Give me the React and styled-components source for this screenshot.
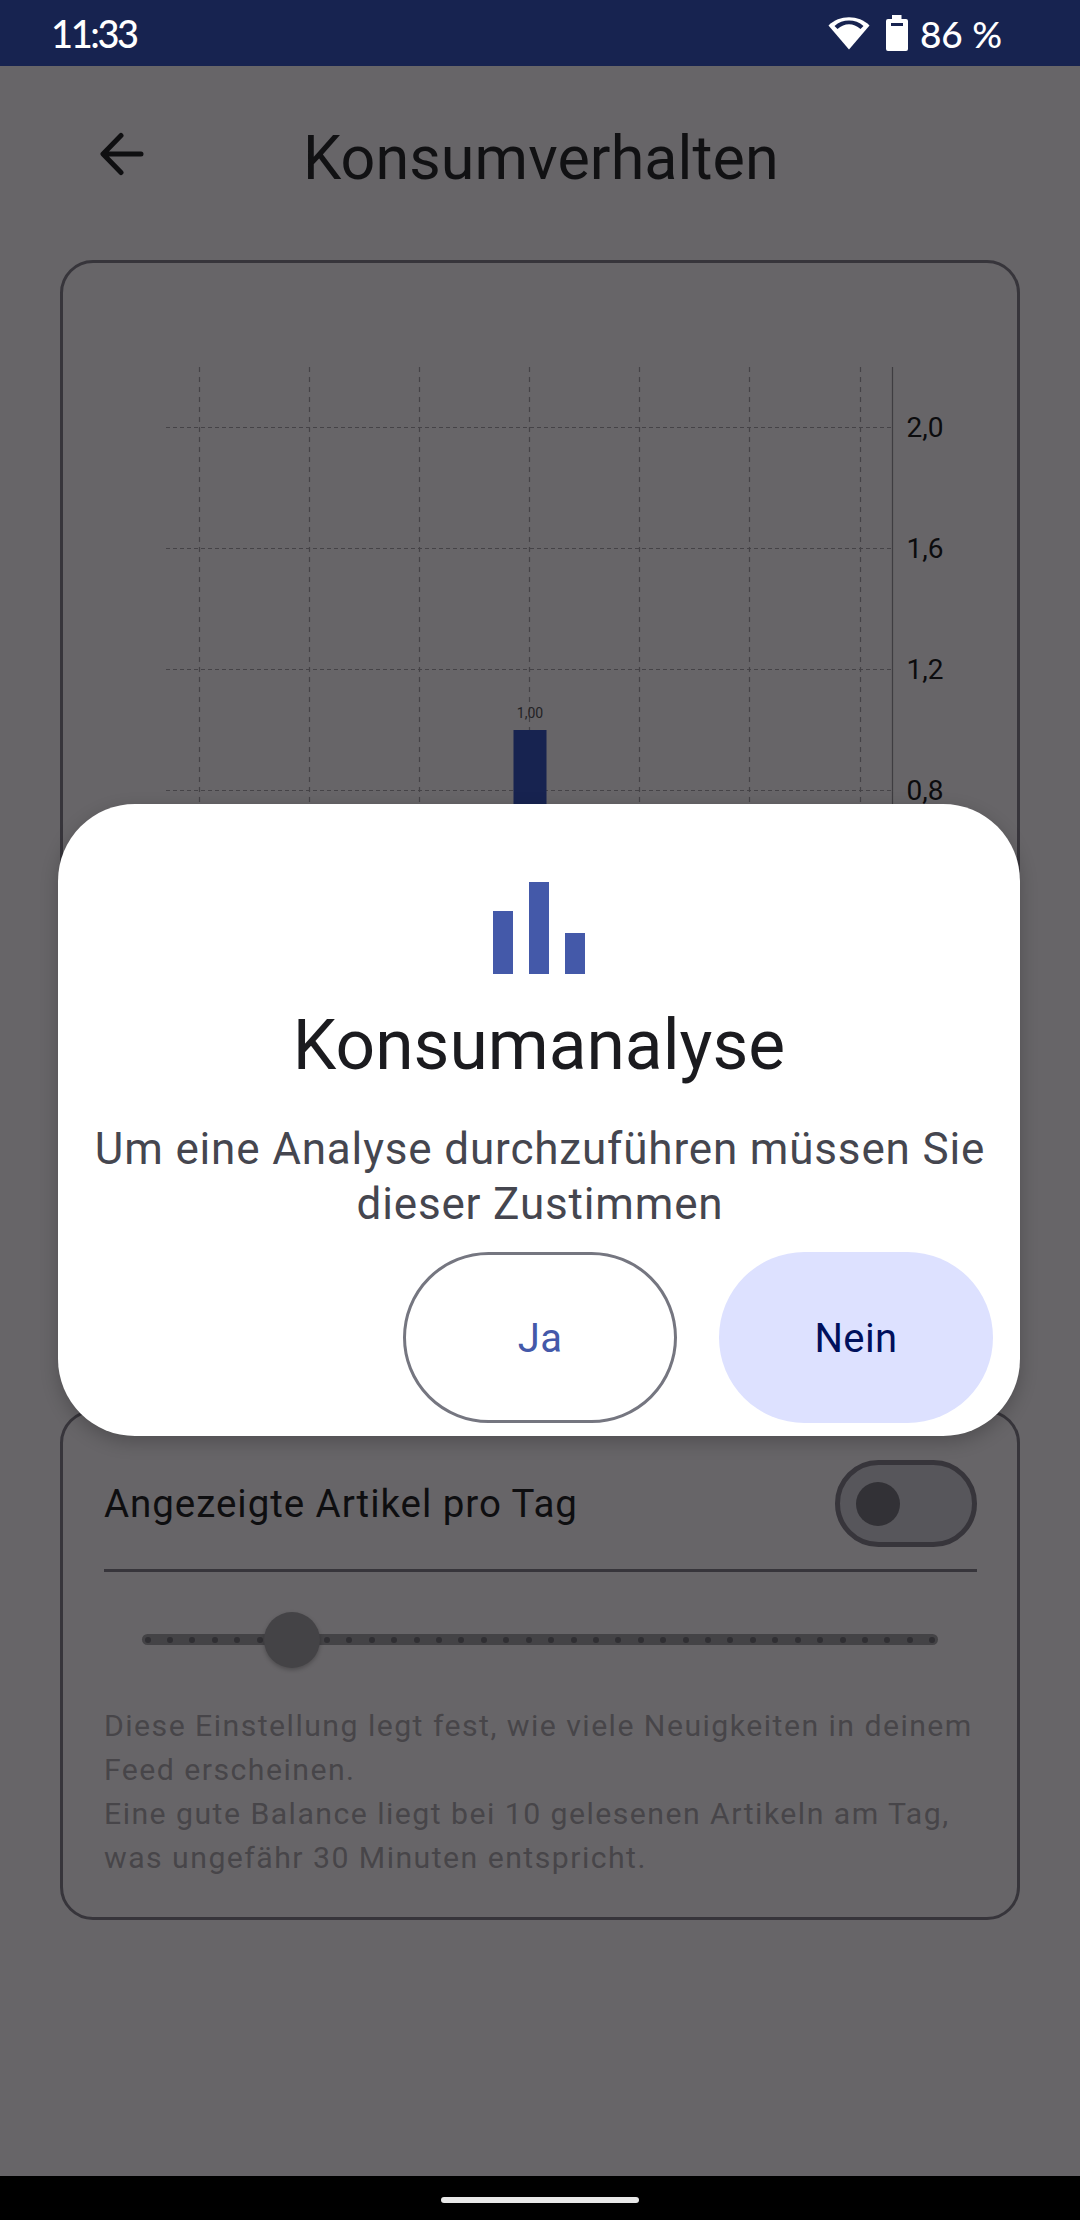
import React from "react";
import styled, { createGlobalStyle } from "styled-components";

const GlobalStyle = createGlobalStyle`
  html, body {
    margin: 0;
    padding: 0;
    background: #676568;
    font-family: Roboto, "Liberation Sans", sans-serif;
  }
`;

const GRID_X = [199, 309, 419, 529, 639, 749, 860];
const GRID_Y = [
  { y: 427.5, label: "2,0" },
  { y: 548.5, label: "1,6" },
  { y: 669.5, label: "1,2" },
  { y: 790.5, label: "0,8" },
  { y: 911.5, label: "0,4" },
  { y: 1032.5, label: "0,0" },
];
const TICKS = Array.from({ length: 36 }, (_, i) => i);

const Chart = () => (
  <ChartSvg viewBox="0 0 960 800" width="960" height="800">
    {GRID_X.map((x) => (
      <line key={x} x1={x - 59.5} x2={x - 59.5} y1="107" y2="772" stroke="#454347" strokeWidth="1.2" strokeDasharray="5 5" />
    ))}
    {GRID_Y.map(({ y, label }) => (
      <g key={label}>
        <line x1="106" x2="832" y1={y - 260} y2={y - 260} stroke="#454347" strokeWidth="1.2" strokeDasharray="4 3" />
        <text x="846.5" y={y - 260 + 9} fontSize="28" fill="#0c0c0e" fontFamily="Roboto">{label}</text>
      </g>
    ))}
    <line x1="832.5" x2="832.5" y1="107" y2="772" stroke="#3f3d41" strokeWidth="1.2" />
    <rect x="453.5" y="470" width="33" height="304" fill="#172350" />
    <text x="470" y="458" fontSize="14" textAnchor="middle" fill="#232225" fontFamily="Roboto">1,00</text>
  </ChartSvg>
);

const WifiIcon = () => (
  <svg width="42" height="34" viewBox="0 0 42 34">
    <path d="M0.5 9.5 C11 -1.5 31 -1.5 41.5 9.5 L21 33.5 Z" fill="#fff" />
    <path d="M6.5 10 C14.5 2.7 27.5 2.7 35.5 10 L32.5 13 C25.5 6.6 16.5 6.6 9.5 13 Z" fill="#172350" />
  </svg>
);

const BatteryIcon = () => (
  <svg width="22" height="36" viewBox="0 0 22 36">
    <path d="M6 0 H15.5 V4 H20 Q22 4 22 6 V34 Q22 36 20 36 H2 Q0 36 0 34 V6 Q0 4 2 4 H6 Z" fill="#fff" />
    <rect x="5" y="8" width="12" height="3" fill="#172350" />
  </svg>
);

const BackIcon = () => (
  <svg width="44" height="44" viewBox="0 0 44 44" fill="none" stroke="#0f0f11" strokeWidth="5" strokeLinecap="round" strokeLinejoin="round">
    <path d="M41 22 H4 M21 3.5 L3 22 L21 40.5" />
  </svg>
);

const AnalysisIcon = () => (
  <svg width="92" height="92" viewBox="0 0 92 92" fill="#4459a9">
    <rect x="0" y="29" width="20" height="63" />
    <rect x="36" y="0" width="20" height="92" />
    <rect x="72" y="51" width="20" height="41" />
  </svg>
);

export default function App() {
  return (
    <>
      <GlobalStyle />
      <Page>
        <StatusBar>
          <Clock>11:33</Clock>
          <StatusIcons>
            <WifiIcon />
            <BatteryIcon />
            <BatteryText>86 %</BatteryText>
          </StatusIcons>
        </StatusBar>

        <Header>
          <BackButton><BackIcon /></BackButton>
          <Title>Konsumverhalten</Title>
        </Header>

        <Content>
          <ChartCard>
            <Chart />
          </ChartCard>

          <SettingsCard>
            <SettingRow>
              <SettingLabel>Angezeigte Artikel pro Tag</SettingLabel>
              <Switch><SwitchThumb /></Switch>
            </SettingRow>
            <Divider />
            <Slider>
              <Track>
                {TICKS.map((i) => <Tick key={i} />)}
              </Track>
              <SliderThumb />
            </Slider>
            <HelpText>
              Diese Einstellung legt fest, wie viele Neuigkeiten in deinem Feed erscheinen.
              <br />
              Eine gute Balance liegt bei 10 gelesenen Artikeln am Tag, was ungefähr 30 Minuten entspricht.
            </HelpText>
          </SettingsCard>
        </Content>

        <NavBar><HomePill /></NavBar>

        <Dialog>
          <AnalysisIcon />
          <DialogTitle>Konsumanalyse</DialogTitle>
          <DialogText>Um eine Analyse durchzuführen müssen Sie dieser Zustimmen</DialogText>
          <DialogActions>
            <OutlineButton>Ja</OutlineButton>
            <FilledButton>Nein</FilledButton>
          </DialogActions>
        </Dialog>
      </Page>
    </>
  );
}

const Page = styled.div`
  position: relative;
  width: 1080px;
  height: 2220px;
  display: flex;
  flex-direction: column;
  overflow: hidden;
  background: #676568;
`;

const StatusBar = styled.div`
  height: 66px;
  flex: none;
  display: flex;
  align-items: center;
  justify-content: space-between;
  padding: 0 78px 0 51px;
  background: #172350;
  color: #fff;
  font-family: Lato, Roboto, sans-serif;
`;

const Clock = styled.span`
  font-size: 38px;
  font-weight: 500;
  letter-spacing: -2.4px;
`;

const StatusIcons = styled.div`
  display: flex;
  align-items: center;
  gap: 16px;
`;

const BatteryText = styled.span`
  font-size: 37px;
  font-weight: 500;
  margin-left: -4px;
`;

const Header = styled.div`
  height: 194px;
  flex: none;
  display: flex;
  align-items: flex-start;
  padding: 65px 0 0 100px;
  box-sizing: border-box;
`;

const BackButton = styled.div`
  width: 44px;
  height: 44px;
  margin-top: 1px;
`;

const Title = styled.h1`
  margin: -13px 0 0 159px;
  font-size: 61px;
  font-weight: 400;
  letter-spacing: 0.1px;
  line-height: 80px;
  color: #111113;
`;

const Content = styled.div`
  flex: 1;
  display: flex;
  flex-direction: column;
  gap: 18px;
  padding: 0 60px;
`;

const ChartCard = styled.section`
  height: 1132px;
  box-sizing: border-box;
  border: 3px solid #37353b;
  border-radius: 33px;
  overflow: hidden;
`;

const ChartSvg = styled.svg`
  display: block;
  margin: -3px;
`;

const SettingsCard = styled.section`
  height: 510px;
  box-sizing: border-box;
  border: 3px solid #37353b;
  border-radius: 33px;
  padding: 47px 40px 0 41px;
`;

const SettingRow = styled.div`
  display: flex;
  align-items: center;
  justify-content: space-between;
  height: 87px;
`;

const SettingLabel = styled.span`
  font-size: 38.5px;
  letter-spacing: 0.95px;
  color: #0e0e10;
`;

const Switch = styled.div`
  width: 142px;
  height: 87px;
  box-sizing: border-box;
  border: 5.5px solid #37353b;
  border-radius: 44px;
  background: #57565b;
  display: flex;
  align-items: center;
  padding-left: 16px;
`;

const SwitchThumb = styled.div`
  width: 44px;
  height: 44px;
  border-radius: 50%;
  background: #323136;
`;

const Divider = styled.div`
  height: 3px;
  margin-top: 22px;
  background: #37353b;
`;

const Slider = styled.div`
  position: relative;
  margin: 62px 0 0 38px;
  width: 796px;
  height: 11px;
`;

const Track = styled.div`
  height: 11px;
  box-sizing: border-box;
  border-radius: 6px;
  background: #444346;
  display: flex;
  align-items: center;
  justify-content: space-between;
  padding: 0 2.5px;
`;

const Tick = styled.div`
  width: 6px;
  height: 6px;
  border-radius: 50%;
  background: #302f33;
`;

const SliderThumb = styled.div`
  position: absolute;
  left: 122px;
  top: -22.5px;
  width: 56px;
  height: 56px;
  border-radius: 50%;
  background: #444346;
  box-shadow: 0 2px 4px rgba(0, 0, 0, 0.25);
`;

const HelpText = styled.p`
  margin: 59px 0 0;
  font-size: 30.25px;
  line-height: 44px;
  letter-spacing: 1.45px;
  color: #474549;
`;

const NavBar = styled.div`
  height: 44px;
  flex: none;
  background: #000;
  display: flex;
  justify-content: center;
  padding-top: 21px;
  box-sizing: border-box;
`;

const HomePill = styled.div`
  width: 198px;
  height: 6px;
  border-radius: 3px;
  background: #e8e8e8;
`;

const Dialog = styled.div`
  position: absolute;
  left: 58px;
  top: 804px;
  width: 962px;
  height: 632px;
  box-sizing: border-box;
  padding-top: 78px;
  border-radius: 77px;
  background: #fff;
  box-shadow: 0 6px 18px rgba(0, 0, 0, 0.22);
  display: flex;
  flex-direction: column;
  align-items: center;
`;

const DialogTitle = styled.h2`
  margin: 28px 0 0;
  font-size: 69.5px;
  font-weight: 400;
  line-height: 88px;
  color: #1b1b1f;
`;

const DialogText = styled.p`
  margin: 32px 0 0 2px;
  width: 920px;
  font-size: 44px;
  line-height: 55px;
  letter-spacing: 0.84px;
  text-align: center;
  color: #45464f;
`;

const DialogActions = styled.div`
  align-self: stretch;
  display: flex;
  justify-content: flex-end;
  gap: 42px;
  margin-top: 20px;
  padding-right: 27px;
`;

const ActionButton = styled.div`
  width: 274px;
  height: 171px;
  box-sizing: border-box;
  padding-top: 2px;
  border-radius: 86px;
  display: flex;
  align-items: center;
  justify-content: center;
  font-size: 40px;
  letter-spacing: 0.4px;
`;

const OutlineButton = styled(ActionButton)`
  border: 3px solid #757680;
  color: #4459a9;
`;

const FilledButton = styled(ActionButton)`
  background: #dde1ff;
  color: #00105c;
`;
